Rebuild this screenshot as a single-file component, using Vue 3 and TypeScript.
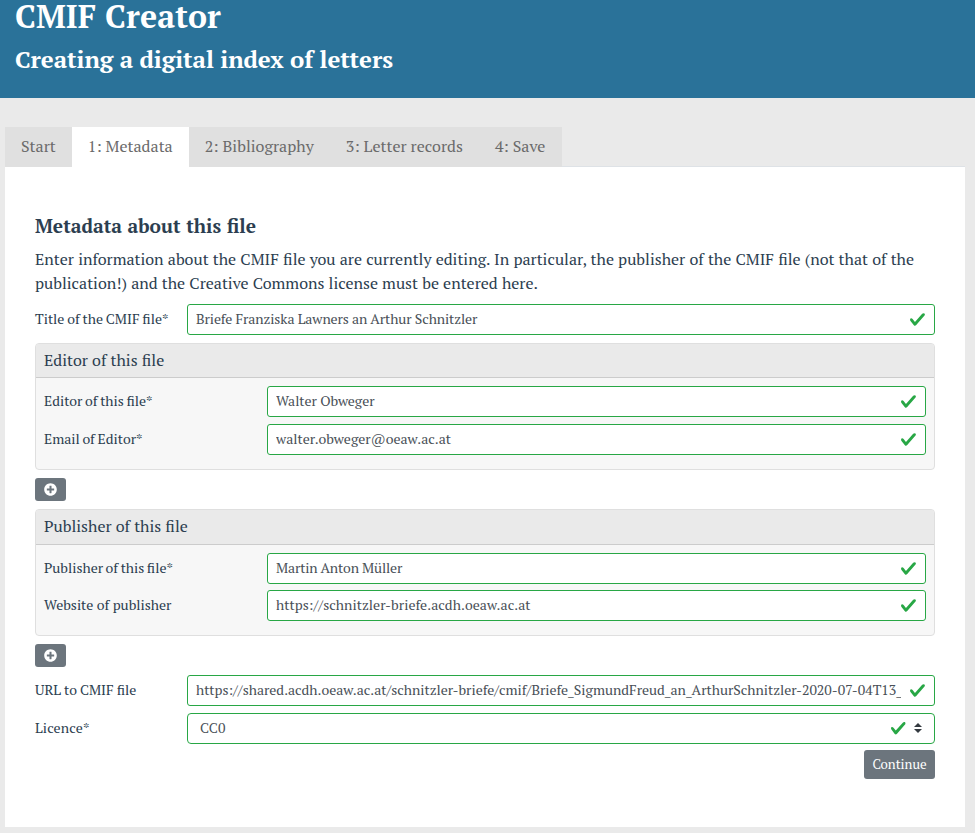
<script setup lang="ts">
import { ref } from 'vue'

interface Field {
  id: string
  label: string
  wordGap: number
  value: string
  valueSpacing: number
}

interface Section {
  title: string
  fields: Field[]
}

const tabs = ['Start', '1: Metadata', '2: Bibliography', '3: Letter records', '4: Save']
const activeTab = ref(1)

const titleField = ref<Field>({
  id: 'title',
  label: 'Title of the CMIF file*',
  wordGap: -0.57,
  value: 'Briefe Franziska Lawners an Arthur Schnitzler',
  valueSpacing: -0.098,
})

const sections = ref<Section[]>([
  {
    title: 'Editor of this file',
    fields: [
      { id: 'editor', label: 'Editor of this file*', wordGap: -0.8, value: 'Walter Obweger', valueSpacing: -0.045 },
      { id: 'email', label: 'Email of Editor*', wordGap: -0.75, value: 'walter.obweger@oeaw.ac.at', valueSpacing: 0.019 },
    ],
  },
  {
    title: 'Publisher of this file',
    fields: [
      { id: 'publisher', label: 'Publisher of this file*', wordGap: -0.9, value: 'Martin Anton Müller', valueSpacing: -0.145 },
      { id: 'website', label: 'Website of publisher', wordGap: 0, value: 'https://schnitzler-briefe.acdh.oeaw.ac.at', valueSpacing: 0.048 },
    ],
  },
])

const urlField = ref<Field>({
  id: 'url',
  label: 'URL to CMIF file',
  wordGap: -0.4,
  value: 'https://shared.acdh.oeaw.ac.at/schnitzler-briefe/cmif/Briefe_SigmundFreud_an_ArthurSchnitzler-2020-07-04T13_',
  valueSpacing: -0.014,
})

const licence = ref('CC0')
const labelStyle = (field: Field) => ({ wordSpacing: `${field.wordGap}px` })
const valueStyle = (field: Field) => ({ letterSpacing: `${field.valueSpacing}px` })
</script>

<template>
  <div class="page">
    <header class="banner">
      <h1>CMIF Creator</h1>
      <h2>Creating a digital index of letters</h2>
    </header>

    <main class="content">
      <nav class="tabs">
        <a
          v-for="(tab, i) in tabs"
          :key="tab"
          class="tab"
          :class="{ active: i === activeTab }"
          @click="activeTab = i"
        >{{ tab }}</a>
      </nav>

      <section class="panel">
        <h3>Metadata about this file</h3>
        <p class="intro">
          Enter information about the CMIF file you are currently editing. In particular, the publisher of the CMIF file (not that of the publication!) and the Creative Commons license must be entered here.
        </p>

        <div class="row title-row">
          <label :for="titleField.id" :style="labelStyle(titleField)">{{ titleField.label }}</label>
          <div class="control">
            <input :id="titleField.id" v-model="titleField.value" :style="valueStyle(titleField)" spellcheck="false">
            <svg class="check" viewBox="0 0 8 8"><path d="M2.3 6.73L.6 4.53c-.4-1.04.46-1.4 1.1-.8l1.1 1.4 3.4-3.8c.6-.63 1.6-.27 1.2.7l-4 4.6c-.43.5-.8.4-1.1.1z" /></svg>
          </div>
        </div>

        <div v-for="section in sections" :key="section.title" class="group">
          <div class="card">
            <div class="card-header">{{ section.title }}</div>
            <div class="card-body">
              <div v-for="field in section.fields" :key="field.id" class="row">
                <label :for="field.id" :style="labelStyle(field)">{{ field.label }}</label>
                <div class="control">
                  <input :id="field.id" v-model="field.value" :style="valueStyle(field)" spellcheck="false">
                  <svg class="check" viewBox="0 0 8 8"><path d="M2.3 6.73L.6 4.53c-.4-1.04.46-1.4 1.1-.8l1.1 1.4 3.4-3.8c.6-.63 1.6-.27 1.2.7l-4 4.6c-.43.5-.8.4-1.1.1z" /></svg>
                </div>
              </div>
            </div>
          </div>
          <button type="button" class="btn add">
            <svg viewBox="0 0 512 512"><path d="M256 8C119 8 8 119 8 256s111 248 248 248 248-111 248-248S393 8 256 8zm144 276c0 6.600-5.400 12-12 12h-92v92c0 6.600-5.400 12-12 12h-56c-6.600 0-12-5.400-12-12v-92h-92c-6.600 0-12-5.400-12-12v-56c0-6.600 5.400-12 12-12h92v-92c0-6.600 5.400-12 12-12h56c6.600 0 12 5.400 12 12v92h92c6.600 0 12 5.400 12 12v56z" /></svg>
          </button>
        </div>

        <div class="row">
          <label :for="urlField.id" :style="labelStyle(urlField)">{{ urlField.label }}</label>
          <div class="control">
            <input :id="urlField.id" v-model="urlField.value" :style="valueStyle(urlField)" spellcheck="false">
            <svg class="check" viewBox="0 0 8 8"><path d="M2.3 6.73L.6 4.53c-.4-1.04.46-1.4 1.1-.8l1.1 1.4 3.4-3.8c.6-.63 1.6-.27 1.2.7l-4 4.6c-.43.5-.8.4-1.1.1z" /></svg>
          </div>
        </div>

        <div class="row">
          <label for="licence" class="licence-label">Licence*</label>
          <div class="control">
            <select id="licence" v-model="licence">
              <option>CC0</option>
            </select>
            <svg class="check shifted" viewBox="0 0 8 8"><path d="M2.3 6.73L.6 4.53c-.4-1.04.46-1.4 1.1-.8l1.1 1.4 3.4-3.8c.6-.63 1.6-.27 1.2.7l-4 4.6c-.43.5-.8.4-1.1.1z" /></svg>
            <svg class="caret" viewBox="0 0 4 5"><path d="M2 0L0 2h4zm0 5L0 3h4z" /></svg>
          </div>
        </div>

        <div class="actions">
          <button type="button" class="btn continue">Continue</button>
        </div>
      </section>
    </main>
  </div>
</template>

<style>
body {
  margin: 0;
  background: #eaeaea;
}
</style>

<style scoped>
.page {
  box-sizing: border-box;
  height: 833px;
  font: 16px/24px 'PT Serif', 'Liberation Serif', serif;
  color: #2c3e50;
  background: #eaeaea;
}

.banner {
  box-sizing: border-box;
  height: 98px;
  padding-left: 15px;
  color: #fff;
  background: #2a7299;
}

h1,
h2,
h3 {
  margin: 0;
  font-weight: 700;
}

h1 {
  padding-bottom: 13px;
  font-size: 32px;
  line-height: 32px;
  letter-spacing: 0.1px;
}

h2 {
  font-size: 24px;
  line-height: 29px;
  letter-spacing: -0.059px;
}

.content {
  padding: 29px 10px 0 5px;
}

.tabs {
  display: flex;
  border-bottom: 1px solid #dee2e6;
}

.tab {
  height: 40px;
  box-sizing: border-box;
  margin-bottom: -1px;
  padding: 7px 16px 9px;
  line-height: 24px;
  letter-spacing: 0.03px;
  color: #6b6b6b;
  background: #e0e0e0;
  cursor: pointer;
}

.tab:last-child {
  padding-right: 16.8px;
}

.tab.active {
  background: #fff;
}

.panel {
  box-sizing: border-box;
  height: 660px;
  padding: 47px 30px 0;
  background: #fff;
}

h3 {
  font-size: 19.2px;
  line-height: 23px;
  word-spacing: 0.4px;
}

.intro {
  margin: 10px 0 9px;
  word-spacing: 0.3px;
}

.row {
  display: grid;
  grid-template-columns: 152px 1fr;
  align-items: center;
  margin-bottom: 6.6px;
  font-size: 14px;
}

.title-row {
  margin-bottom: 8px;
}

label {
  padding-bottom: 2px;
  line-height: 21px;
}

.licence-label {
  letter-spacing: 0.15px;
}

.control {
  position: relative;
  display: flex;
}

input,
select {
  width: 100%;
  height: 31px;
  box-sizing: border-box;
  margin: 0;
  padding: 3px 33px 5px 8px;
  font: 14px/21px 'PT Serif', 'Liberation Serif', serif;
  color: #495057;
  background: #fff;
  border: 1px solid #28a745;
  border-radius: 3px;
  outline: 0;
}

select {
  padding-left: 12px;
  appearance: none;
  border-radius: 4px;
  letter-spacing: 0.1px;
}

.check {
  position: absolute;
  top: 7.25px;
  right: 9px;
  width: 17px;
  height: 17px;
  fill: #28a745;
}

.check.shifted {
  right: 29px;
  width: 16.5px;
  height: 16.5px;
}

.caret {
  position: absolute;
  top: 10.5px;
  right: 13px;
  width: 8px;
  height: 10px;
  fill: #343a40;
}

.group {
  margin-bottom: 8.5px;
}

.group:nth-last-of-type(4) {
  margin-bottom: 7.9px;
}

.card {
  box-sizing: border-box;
  height: 126.6px;
  border: 1px solid #dfdfdf;
  border-radius: 4px;
  overflow: hidden;
  background: #f7f7f7;
}

.card-header {
  height: 34.3px;
  box-sizing: border-box;
  padding: 4px 8px;
  word-spacing: 0.25px;
  background: #eaeaea;
  border-bottom: 1px solid #ccc;
}

.card-body {
  padding: 7.9px 8px 0;
}

.card .row {
  grid-template-columns: 223px 1fr;
}

.btn {
  display: block;
  margin: 0;
  padding: 0;
  color: #fff;
  background: #6c757d;
  border: 0;
  border-radius: 3px;
}

.add {
  display: grid;
  place-items: center;
  width: 31px;
  height: 23px;
  margin-top: 8.3px;
}

.add svg {
  width: 13px;
  height: 13px;
  fill: #fff;
}

.actions {
  display: flex;
  justify-content: flex-end;
}

.continue {
  width: 71px;
  height: 29px;
  padding-bottom: 1px;
  font: 13.2px/20px 'PT Serif', 'Liberation Serif', serif;
}
</style>
